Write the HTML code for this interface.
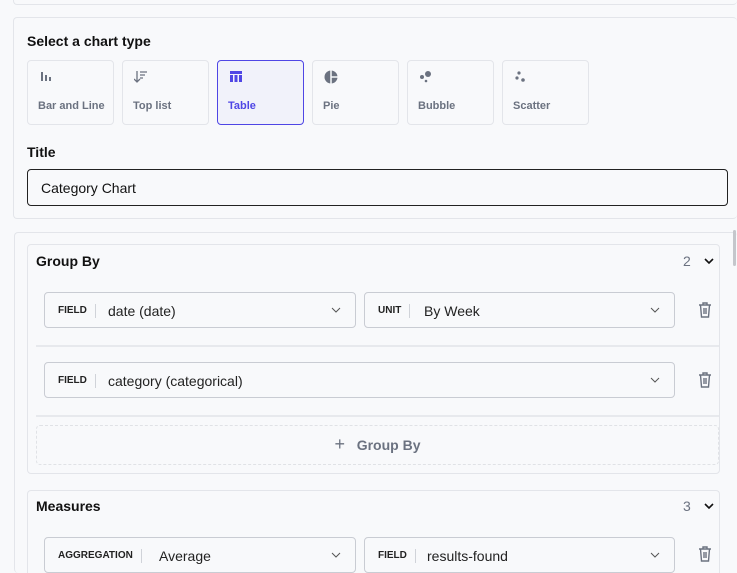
<!DOCTYPE html><html style="width:737px;height:573px;overflow:hidden"><head><style>
*{box-sizing:border-box;margin:0;padding:0}
body{width:737px;height:573px;overflow:hidden;background:#f8f9fb;font-family:"Liberation Sans",sans-serif;position:relative;color:#111}
#w{position:absolute;left:0;top:0;width:737px;height:573px;overflow:hidden}
.a{position:absolute}
.panel{position:absolute;border:1px solid #e3e5ea;border-radius:4px;background:#f8f9fb}
.card{position:absolute;top:60px;width:87px;height:65px;border:1px solid #e3e5ea;border-radius:4px;background:#f8f9fb}
.card span{position:absolute;left:10px;top:39px;font-size:11px;font-weight:bold;color:#6b7280}
.card svg{position:absolute;left:11px;top:9px}
.sel{position:absolute;height:36px;border:1px solid #c9ccd3;border-radius:4px;background:#f8f9fb;font-size:14px}
.sel b{position:absolute;left:13px;font-size:10px;font-weight:bold;color:#222;padding-right:8px;border-right:1px solid #d0d3d9;line-height:14px;top:11px}
.sel i{font-style:normal;position:absolute;top:10px;color:#222}
.sel svg{position:absolute;right:14px;top:14px}
.div{position:absolute;left:36px;width:683px;height:2px;background:#e7e9ed}
.trash{position:absolute;left:697px}
</style></head><body><div id="w">
<div class="panel" style="left:13px;top:-10px;width:724px;height:15px;border-right:none"></div>
<div class="panel" style="left:13px;top:17px;width:724px;height:202px;border-right:none"></div>
<div class="a" style="left:27px;top:33px;font-size:14px;font-weight:bold">Select a chart type</div>
<div class="card" style="left:27px"><svg width="14" height="14"><rect x="2" y="2" width="2" height="9" fill="#6b7280"/><rect x="6" y="5" width="2" height="6" fill="#6b7280"/><rect x="10" y="7" width="2" height="4" fill="#6b7280"/></svg><span>Bar and Line</span></div>
<div class="card" style="left:122px"><svg width="14" height="14"><path d="M3 1v11M0 9l3 3 3-3M6 2h7M6 5h5M6 8h3" stroke="#6b7280" stroke-width="1.3" fill="none"/></svg><span>Top list</span></div>
<div class="card" style="left:217px;border-color:#4f46e5;background:#f1f2fa"><svg width="14" height="14"><rect x="1" y="1" width="12" height="3" fill="#4f46e5"/><rect x="1" y="5" width="3" height="7" fill="#4f46e5"/><rect x="5.5" y="5" width="3" height="7" fill="#4f46e5"/><rect x="10" y="5" width="3" height="7" fill="#4f46e5"/></svg><span style="color:#4f46e5">Table</span></div>
<div class="card" style="left:312px"><svg width="16" height="16"><circle cx="7" cy="7" r="6.5" fill="#6b7280"/><path d="M7 0v14M7 7h7" stroke="#f8f9fb" stroke-width="1.5"/></svg><span>Pie</span></div>
<div class="card" style="left:407px"><svg width="14" height="14"><circle cx="9" cy="4" r="3" fill="#6b7280"/><circle cx="3" cy="7" r="2" fill="#6b7280"/><circle cx="7" cy="11" r="1.3" fill="#6b7280"/></svg><span>Bubble</span></div>
<div class="card" style="left:502px"><svg width="14" height="14"><circle cx="5" cy="3" r="1.6" fill="#6b7280"/><circle cx="3" cy="8" r="1.6" fill="#6b7280"/><circle cx="9" cy="10" r="1.8" fill="#6b7280"/></svg><span>Scatter</span></div>
<div class="a" style="left:27px;top:144px;font-size:14px;font-weight:bold">Title</div>
<div class="a" style="left:27px;top:169px;width:701px;height:37px;border:1px solid #222;border-radius:4px;padding:10px 13px;font-size:14px">Category Chart</div>

<div class="panel" style="left:14px;top:232px;width:723px;height:341px;border-right:none;border-bottom:none"></div>
<div class="a" style="left:733px;top:230px;width:3px;height:36px;background:#c4c6cb;border-radius:2px"></div>
<div class="panel" style="left:27px;top:244px;width:693px;height:230px"></div>
<div class="a" style="left:36px;top:253px;font-size:14px;font-weight:bold">Group By</div>
<div class="a" style="left:683px;top:253px;font-size:14px;color:#6b7280">2</div>
<svg class="a" style="left:703px;top:257px" width="12" height="8"><path d="M2 2l4 4 4-4" stroke="#111" stroke-width="1.6" fill="none"/></svg>

<div class="sel" style="left:44px;top:292px;width:312px"><b>FIELD</b><i style="left:63px">date (date)</i><svg width="10" height="6"><path d="M1 1l4 4 4-4" stroke="#555" fill="none"/></svg></div>
<div class="sel" style="left:364px;top:292px;width:311px"><b>UNIT</b><i style="left:59px">By Week</i><svg width="10" height="6"><path d="M1 1l4 4 4-4" stroke="#555" fill="none"/></svg></div>
<svg class="trash" style="top:301px" width="16" height="18"><path d="M2 4h12M6 4V2h4v2M3.5 4l1 12h7l1-12M7 7v6M9 7v6" stroke="#6b7280" stroke-width="1.4" fill="none"/></svg>
<div class="div" style="top:345px"></div>
<div class="sel" style="left:44px;top:362px;width:631px"><b>FIELD</b><i style="left:63px">category (categorical)</i><svg width="10" height="6"><path d="M1 1l4 4 4-4" stroke="#555" fill="none"/></svg></div>
<svg class="trash" style="top:371px" width="16" height="18"><path d="M2 4h12M6 4V2h4v2M3.5 4l1 12h7l1-12M7 7v6M9 7v6" stroke="#6b7280" stroke-width="1.4" fill="none"/></svg>
<div class="div" style="top:415px"></div>
<div class="a" style="left:36px;top:425px;width:683px;height:40px;border:1px dashed #e0e2e6;border-radius:4px;text-align:center;padding-top:11px;font-size:14px;font-weight:bold;color:#6b7280"><span style="font-weight:normal;font-size:18px;line-height:14px">+</span>&nbsp;&nbsp; Group By</div>

<div class="panel" style="left:27px;top:490px;width:693px;height:83px;border-bottom:none;border-radius:4px 4px 0 0"></div>
<div class="a" style="left:36px;top:498px;font-size:14px;font-weight:bold">Measures</div>
<div class="a" style="left:683px;top:498px;font-size:14px;color:#6b7280">3</div>
<svg class="a" style="left:703px;top:502px" width="12" height="8"><path d="M2 2l4 4 4-4" stroke="#111" stroke-width="1.6" fill="none"/></svg>
<div class="sel" style="left:44px;top:537px;width:312px;height:36px"><b>AGGREGATION</b><i style="left:114px">Average</i><svg width="10" height="6"><path d="M1 1l4 4 4-4" stroke="#555" fill="none"/></svg></div>
<div class="sel" style="left:364px;top:537px;width:311px;height:36px"><b>FIELD</b><i style="left:62px">results-found</i><svg width="10" height="6"><path d="M1 1l4 4 4-4" stroke="#555" fill="none"/></svg></div>
<svg class="trash" style="top:545px" width="16" height="18"><path d="M2 4h12M6 4V2h4v2M3.5 4l1 12h7l1-12M7 7v6M9 7v6" stroke="#6b7280" stroke-width="1.4" fill="none"/></svg>
</div></body></html>
